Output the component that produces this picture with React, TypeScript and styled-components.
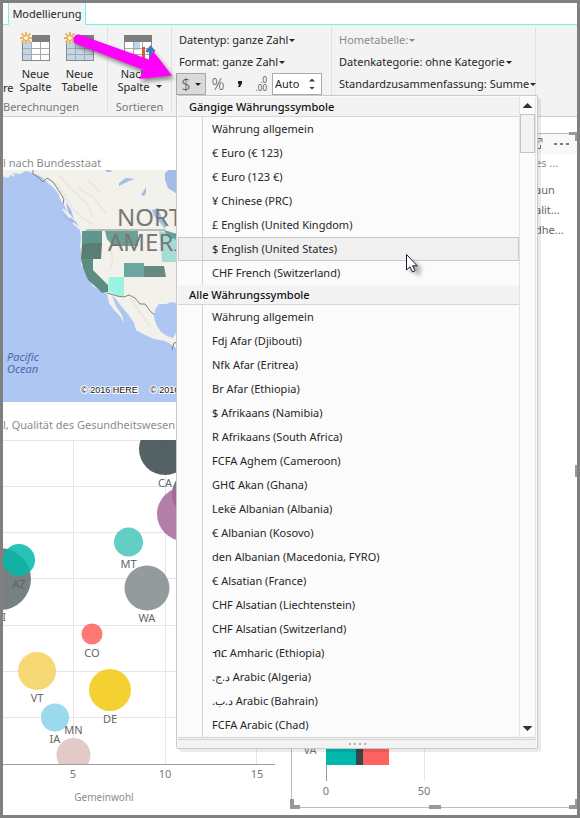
import React from "react";
import styled, { createGlobalStyle, css } from "styled-components";

const GlobalStyle = createGlobalStyle`
  *, *::before, *::after { box-sizing: border-box; }
  body {
    margin: 0;
    background: #fff;
    color: #262626;
    font: 11px/14px "Noto Sans", "Noto Sans CJK SC", sans-serif;
  }
  button, input { font: inherit; color: inherit; }
  button { margin: 0; padding: 0; border: 0; background: none; }
  svg { display: block; }
`;

const Frame = styled.div`
  display: flex;
  flex-direction: column;
  min-height: 100vh;
  border: 3px solid #808080;
  overflow: hidden;
`;

/* ---------- ribbon ---------- */

const TabStrip = styled.nav`
  display: flex;
  height: 22px;
  border-bottom: 1px solid #73f7dc;
  padding-left: 5px;
`;

const Tab = styled.button`
  width: 78px;
  height: 22px;
  border: solid #73f7dc;
  border-width: 0 1px;
  background: #f3f3f3;
`;

const Ribbon = styled.header`
  position: relative;
  z-index: 2;
  display: flex;
  height: 92px;
  padding-top: 2px;
  background: #f3f3f3;
  border-bottom: 1px solid #cfcfcf;
`;

const Group = styled.section<{ $width?: number }>`
  display: flex;
  flex-direction: column;
  flex: none;
  width: ${(p) => (p.$width ? `${p.$width}px` : "auto")};
  margin-bottom: 3px;
  border-right: 1px solid #e0e0e0;
`;

const GroupRow = styled.div<{ $end?: boolean }>`
  display: flex;
  flex: 1;
  justify-content: ${(p) => (p.$end ? "flex-end" : "center")};
  overflow: hidden;
`;

const GroupLabel = styled.span<{ $start?: boolean }>`
  color: #777;
  height: 13px;
  line-height: 13px;
  text-align: ${(p) => (p.$start ? "left" : "center")};
`;

const BigButton = styled.button<{ $width?: number }>`
  display: flex;
  flex: none;
  flex-direction: column;
  align-items: center;
  width: ${(p) => p.$width ?? 44}px;
  padding-top: 4px;
  line-height: 13px;
  white-space: nowrap;
`;

const Trimmed = styled.span`
  width: 11px;
  padding-top: 52px;
  line-height: 18px;
`;

const IconCaption = styled.span`
  padding-right: 11px;
`;

const DropLine = styled.span`
  display: flex;
  align-items: center;
  gap: 6px;
`;

const Fields = styled.div<{ $inset: number }>`
  display: flex;
  flex-direction: column;
  align-items: flex-start;
  padding: 1px 0 0 ${(p) => p.$inset}px;
`;

const DropButton = styled.button`
  display: flex;
  align-items: center;
  gap: 1px;
  height: 22px;
  padding-top: 2px;
  white-space: nowrap;
  &:disabled { color: #8a8a8a; }
`;

const Caret = styled.span`
  width: 0;
  height: 0;
  border: solid transparent;
  border-width: 3px 3px 0;
  border-top-color: currentColor;
`;

const FormatBar = styled.div`
  position: relative;
  display: flex;
  height: 22px;
  margin: 1px 0 0 -3px;
`;

const FormatButton = styled.button<{ $open?: boolean; $width?: number }>`
  display: flex;
  align-items: center;
  justify-content: center;
  gap: 4px;
  width: ${(p) => p.$width ?? 28}px;
  color: #555;
  font-size: 16px;
  font-weight: 300;
  ${(p) =>
    p.$open &&
    css`
      background: #dadada;
      border: 1px solid #a6a6a6;
      ${Caret} { color: #222; }
    `}
`;

const DecimalLabel = styled.label`
  display: flex;
  flex-direction: column;
  align-items: flex-end;
  justify-content: center;
  width: 22px;
  padding-right: 4px;
  font-size: 8px;
  line-height: 8px;
  color: #555;
`;

const Spinner = styled.label`
  display: flex;
  width: 50px;
  margin-left: 1px;
  border: 1px solid #ababab;
  background: #fff;
`;

const SpinnerInput = styled.input`
  width: 36px;
  padding: 0 0 0 2px;
  border: 0;
  outline: 0;
  background: none;
`;

const SpinnerArrows = styled.span`
  display: flex;
  flex-direction: column;
  justify-content: center;
  gap: 5px;
`;

const Arrow = styled.button<{ $up?: boolean; $size?: number }>`
  width: ${(p) => (p.$size ?? 3) * 2}px;
  height: ${(p) => p.$size ?? 3}px;
  background: #333;
  clip-path: ${(p) => (p.$up ? "polygon(50% 0, 100% 100%, 0 100%)" : "polygon(0 0, 100% 0, 50% 100%)")};
`;

const Callout = styled.svg`
  position: absolute;
  left: 62px;
  top: 0;
  z-index: 5;
  pointer-events: none;
`;

/* ---------- currency menu ---------- */

const Menu = styled.div`
  position: absolute;
  z-index: 3;
  top: 22px;
  left: 0;
  width: 362px;
  padding: 1px 1px 0;
  background: #fbfbfb;
  border: 1px solid #c9c9c9;
  border-radius: 2px;
  box-shadow: 3px 3px 0 rgba(0, 0, 0, 0.08);
`;

const MenuBody = styled.div`
  display: flex;
`;

const MenuList = styled.div`
  flex: 1;
`;

const MenuHeading = styled.h3`
  height: 20px;
  margin: 0;
  padding-left: 11px;
  font-size: 11px;
  font-weight: 500;
  line-height: 20px;
  color: #111;
  background: #f3f3f3;
  border-bottom: 1px solid #d6d6d6;
`;

const MenuItems = styled.ul`
  margin: 0;
  padding: 0;
  list-style: none;
`;

const Gutter = styled.span`
  width: 25px;
  border-right: 1px solid #d3d3d3;
`;

const MenuItem = styled.button<{ $active?: boolean }>`
  display: flex;
  gap: 9px;
  width: 100%;
  height: 24px;
  line-height: 24px;
  text-align: left;
  white-space: nowrap;
  ${(p) =>
    p.$active &&
    css`
      background: #f0f0f0;
      box-shadow: inset 0 0 0 1px #c9c9c9;
    `}
`;

const ScrollTrack = styled.div`
  display: flex;
  flex-direction: column;
  align-items: center;
  width: 17px;
  padding: 6px 0;
  border: solid #e3e3e3;
  border-width: 0 1px;
`;

const Thumb = styled.span`
  width: 15px;
  height: 39px;
  margin: 6px 0 auto;
  background: #f2f2f2;
  border: 1px solid #c3c3c3;
`;

const Grip = styled.div`
  display: flex;
  justify-content: center;
  align-items: center;
  gap: 3px;
  height: 11px;
  border-top: 3px double #d3d3d3;
  background: #f3f3f3;
`;

const GripDot = styled.i`
  width: 2px;
  height: 2px;
  background: #b3b3b3;
`;

const Pointer = styled.svg`
  position: absolute;
  left: 228px;
  top: 157px;
`;

/* ---------- report canvas ---------- */

const Canvas = styled.main`
  display: flex;
  flex: 1;
  background: #fff;
`;

const LeftColumn = styled.div`
  flex: none;
  width: 287px;
  padding-top: 38px;
`;

const TileTitle = styled.h2<{ $height: number }>`
  height: ${(p) => p.$height}px;
  margin: 0;
  font-size: 11px;
  font-weight: 400;
  line-height: 15px;
  color: #8c8c8c;
  white-space: nowrap;
`;

const TileSpacer = styled.div`
  height: 15px;
`;

const ChartSvg = styled.svg`
  font-size: 11px;
`;

const SelectedTile = styled.section`
  position: relative;
  display: flex;
  flex-direction: column;
  flex: 1;
  margin: 16px 0 7px 1px;
  border: solid #bdbdbd;
  border-width: 1px 0 1px 1px;
`;

const TileTools = styled.div`
  display: flex;
  justify-content: flex-end;
  align-items: center;
  gap: 11px;
  height: 20px;
  padding-right: 7px;
  background: #f8f8f8;
`;

const ToolButton = styled.button`
  color: #777;
`;

const Legend = styled.ul`
  display: flex;
  flex-direction: column;
  gap: 6px;
  margin: 0 0 auto;
  padding: 2px 0 0 243px;
  list-style: none;
  color: #666;
  white-space: nowrap;
`;

const LegendTitle = styled.li`
  margin-bottom: 7px;
  color: #8c8c8c;
`;

type HandleSpot = "tr" | "r" | "bl" | "b" | "br";

const spots: Record<HandleSpot, ReturnType<typeof css>> = {
  tr: css`right: 0; top: -2px; width: 8px; height: 9px; border-width: 3px 2px 0 0;`,
  r: css`right: 0; top: calc(50% - 6px); width: 2px; height: 12px; border-width: 0 2px 0 0;`,
  bl: css`left: -2px; bottom: -2px; width: 10px; height: 10px; border-width: 0 0 4px 4px;`,
  b: css`left: 137px; bottom: -2px; width: 12px; height: 4px; border-width: 0 0 4px 0;`,
  br: css`right: 0; bottom: -2px; width: 8px; height: 10px; border-width: 0 2px 4px 0;`,
};

const Handle = styled.i<{ $spot: HandleSpot }>`
  position: absolute;
  border: solid #999;
  ${(p) => spots[p.$spot]}
`;

/* ---------- drawings ---------- */

function Spark() {
  return (
    <g stroke="#e8b55f" strokeWidth="2" fill="none">
      <circle cx="7" cy="7" r="2.6" fill="#fff8e8" strokeWidth="1.5" />
      <path d="M7 1v3M7 10v3M1 7h3M10 7h3M2.5 2.5l2 2M9.500 9.500l2 2M11.500 2.500l-2 2M4.500 9.500l-2 2" />
    </g>
  );
}

function TableIcon({ full, sort }: { full?: boolean; sort?: boolean }) {
  const width = sort ? 38 : 34;
  return (
    <svg width={width} height="36" viewBox={`0 0 ${width} 36`} aria-hidden="true">
      <rect x="3.500" y="6.500" width="27" height="23" fill="#fff" stroke="#8a8a8a" />
      <rect x="4" y="10" width={full ? 26 : 8} height="19" fill={sort ? "#fff" : "#c1d6e8"} />
      {sort && <rect x="12" y="10" width="7" height="9" fill="#c1d6e8" />}
      <path d="M12.500 10v19M21.500 10v19M4 17.500h26M4 23.500h26" stroke="#a8a8a8" />
      <rect x="3" y="4" width="28" height="7" fill="#7d7d7d" />
      {sort ? (
        <>
          <path d="M22.500 16v14" stroke="#d85c35" strokeWidth="3" />
          <path d="M29.500 32V18M25.500 21l4-4.500 4 4.500" stroke="#3f7cb8" strokeWidth="3" fill="none" />
        </>
      ) : (
        <>
          <rect width="13" height="11" fill="#f3f3f3" />
          <Spark />
        </>
      )}
    </svg>
  );
}

function MapDrawing() {
  return (
    <ChartSvg width="287" height="232" viewBox="3 170 287 232" role="img" aria-label="Nordamerika">
      <rect x="3" y="170" width="287" height="232" fill="#adc7f2" />
      <path
        d="M3 170V176L8 178L13 173L20 174L26 171L33 173L42 177L48 183L53 187L58 193L61 201L65 206L67 213L71 219L75 225L80 230L81 237L80 246L82 257L81 265L84 270L88 278L93 286L102 292L107 294L109 303L114 310L120 316L124 323L122 315L116 306L112 296L116 299L121 306L128 314L134 323L136 330L145 335L154 339L165 341L172 345L180 351H290V170Z"
        fill="#f3f1eb"
      />
      <path d="M290 304H180L172 302L166 304L159 304L155 310L154 318L157 326L161 332L167 336L173 338L176 333L180 331H290Z" fill="#adc7f2" />
      <path
        d="M48 178l10 8 8 11 7 12 12 11 9 5M60 176l11 13 15 13 7 15M77 187l16 10 13 17M109 246l4 12-3 12M130 298l12 17 9 12M87 179l13 13"
        fill="none"
        stroke="#ebe8e0"
        strokeWidth="2"
      />
      <path
        d="M119 183l7-5 9 1-6 2-6 3-4 2zM143 192l3-5v6l-2 3-3-1zM165 173l4-3h8v24l-9-6-3-8zM152 210l6-2 4 10 4 8-1 3-4-5-7-8zM105 170l5 0 2 2-5 0zM62 215l12 10 6 3-4-6-8-7zM66 202l2 10 6 7-3-9z"
        fill="#a3bce8"
      />
      <path d="M4 177l7-4 3 3M52 184l8 10M63 209l7 9M73 223l8 6" stroke="#eef1f5" strokeWidth="2" fill="none" />
      <path d="M82 231h20v14H82z" fill="#5e968b" />
      <path d="M82 244h3l4-1h13l-1 16H81z" fill="#5b7e74" />
      <path d="M81 259h12v11l15 15v7l-6 1-6-6-8-7-5-12z" fill="#5d8d81" />
      <path d="M105 231h33v15h-25l-6-7z" fill="#69a097" />
      <path d="M109 277h15v20l-7-1-9-5z" fill="#9bf3e4" />
      <path d="M124 263h20v14h-20z" fill="#6aa79e" />
      <path d="M144 266h20l2 11h-22z" fill="#668a7f" />
      <path d="M159 231l18 3v28h-15l-1-15z" fill="#a5ddd6" />
      <path d="M164 230l13 4v6l-9-3z" fill="#5da69e" />
      <g fontSize="24" fill="#777774">
        <text x="117" y="226">NORTH</text>
        <text x="108" y="251">AMERICA</text>
      </g>
      <path
        d="M33 170v4l5 3 5 5 4-4 6 4 6 9 5 8-1 5M86 230h79M107 293l10 3 7 1 5-2 6 3 5 6h5l6 8 4 3M172 350l2-7 4-1"
        fill="none"
        stroke="#85837d"
      />
      <g fontStyle="italic" fill="#4b68a6">
        <text x="7" y="361">Pacific</text>
        <text x="7" y="373">Ocean</text>
      </g>
      <g fontSize="9" fontFamily="Liberation Sans, Arial, sans-serif" fill="#111" stroke="#fff" strokeWidth="2" paintOrder="stroke">
        <text x="81" y="393">© 2016 HERE</text>
        <text x="150" y="393">© 2016</text>
      </g>
    </ChartSvg>
  );
}

const bubbles = [
  { x: 165, y: 449, r: 26, fill: "#374649", label: "CA", ly: 487 },
  { x: 198, y: 494, r: 26, fill: "#5f6b6d" },
  { x: 184, y: 514, r: 27, fill: "#a66999" },
  { x: 128.5, y: 542, r: 14.5, fill: "#46c5ba", label: "MT", ly: 568 },
  { x: 147, y: 588, r: 22.5, fill: "#808a8c", label: "WA", ly: 622 },
  { x: 0, y: 579, r: 31, fill: "#5f6b6d" },
  { x: 19, y: 560, r: 16, fill: "#01b8aa", label: "AZ", ly: 588, ink: "#5b6765" },
  { x: 92, y: 634, r: 10.5, fill: "#fd625e", label: "CO", ly: 657 },
  { x: 37, y: 671, r: 19, fill: "#f4d25c", label: "VT", ly: 702 },
  { x: 110, y: 690, r: 21, fill: "#f2c80f", label: "DE", ly: 723 },
  { x: 55, y: 717.5, r: 14, fill: "#8ad4eb", label: "IA", ly: 743 },
  { x: 73.5, y: 755, r: 17, fill: "#dfbfbf", label: "MN", ly: 734 },
];

function BubbleChart() {
  return (
    <ChartSvg width="287" height="370" viewBox="3 440 287 370" role="img" aria-label="Gemeinwohl">
      <path
        d="M3 440.500H275M3 486.500H275M3 532.500H275M3 578.500H275M3 625.500H275M3 671.500H275M3 717.500H275M73.500 440V764M165.500 440V764M256.500 440V764"
        stroke="#e6e6e6"
      />
      <clipPath id="plot"><rect x="3" y="440" width="272" height="324" /></clipPath>
      <g clipPath="url(#plot)" fillOpacity="0.85">
        {bubbles.map((b) => (
          <circle key={`${b.x}-${b.y}`} cx={b.x} cy={b.y} r={b.r} fill={b.fill} />
        ))}
      </g>
      <path d="M3 764.500H275" stroke="#a0a0a0" />
      <g fill="#666" textAnchor="middle">
        {bubbles.map((b) => b.label && (
          <text key={b.label} x={b.x} y={b.ly} fill={b.ink ?? "#666"}>{b.label}</text>
        ))}
        <text x="4" y="621">I</text>
        <g fill="#777">
          <text x="73" y="778">5</text>
          <text x="165" y="778">10</text>
          <text x="257" y="778">15</text>
        </g>
        <text x="104" y="801" fontSize="10" fill="#8c8c8c">Gemeinwohl</text>
      </g>
    </ChartSvg>
  );
}

function BarChart() {
  return (
    <ChartSvg width="285" height="70" viewBox="292 737 285 70" role="img" aria-label="VA">
      <path d="M424.500 737v44" stroke="#e6e6e6" />
      <path d="M326.500 737v44" stroke="#999" />
      <rect x="326" y="744" width="30" height="21" fill="#01b8aa" />
      <rect x="356" y="744" width="7" height="21" fill="#374649" />
      <rect x="363" y="744" width="26" height="21" fill="#fd625e" />
      <g fill="#777" textAnchor="middle">
        <text x="310" y="754">VA</text>
        <text x="326" y="795">0</text>
        <text x="424" y="795">50</text>
      </g>
    </ChartSvg>
  );
}

const common = [
  "Währung allgemein",
  "€ Euro (€ 123)",
  "€ Euro (123 €)",
  "¥ Chinese (PRC)",
  "£ English (United Kingdom)",
  "$ English (United States)",
  "CHF French (Switzerland)",
];

const all = [
  "Währung allgemein",
  "Fdj Afar (Djibouti)",
  "Nfk Afar (Eritrea)",
  "Br Afar (Ethiopia)",
  "$ Afrikaans (Namibia)",
  "R Afrikaans (South Africa)",
  "FCFA Aghem (Cameroon)",
  "GH₵ Akan (Ghana)",
  "Lekë Albanian (Albania)",
  "€ Albanian (Kosovo)",
  "den Albanian (Macedonia, FYRO)",
  "€ Alsatian (France)",
  "CHF Alsatian (Liechtenstein)",
  "CHF Alsatian (Switzerland)",
  "ብር Amharic (Ethiopia)",
  "د.ج.\u200f Arabic (Algeria)",
  "د.ب.\u200f Arabic (Bahrain)",
  "FCFA Arabic (Chad)",
];

function MenuSection({ title, items, active }: { title: string; items: string[]; active?: number }) {
  return (
    <>
      <MenuHeading>{title}</MenuHeading>
      <MenuItems aria-label={title}>
        {items.map((item, i) => (
          <li key={item}>
            <MenuItem $active={i === active}>
              <Gutter />
              <bdi dir="ltr">{item}</bdi>
            </MenuItem>
          </li>
        ))}
      </MenuItems>
    </>
  );
}

function CurrencyMenu() {
  return (
    <Menu>
      <MenuBody>
        <MenuList>
          <MenuSection title="Gängige Währungssymbole" items={common} active={5} />
          <MenuSection title="Alle Währungssymbole" items={all} />
        </MenuList>
        <ScrollTrack>
          <Arrow $up $size={5} aria-label="Nach oben" />
          <Thumb />
          <Arrow $size={5} aria-label="Nach unten" />
        </ScrollTrack>
      </MenuBody>
      <Grip><GripDot /><GripDot /><GripDot /><GripDot /></Grip>
      <Pointer width="22" height="28" viewBox="0 0 22 28" aria-hidden="true">
        <path d="M5 6v14l4-3 4 6 3-2-3-5h5z" fill="#000" opacity="0.35" filter="blur(2px)" />
        <path d="M1.500 1.500v15.500l3.500-3.200 2.500 5.200 2.500-1.200-2.400-5h4.600z" fill="#fff" stroke="#1c1c33" />
      </Pointer>
    </Menu>
  );
}

export default function App() {
  return (
    <Frame>
      <GlobalStyle />
      <TabStrip><Tab>Modellierung</Tab></TabStrip>
      <Ribbon>
        <Group $width={105}>
          <GroupRow $end>
            <Trimmed>re</Trimmed>
            <BigButton><TableIcon />Neue<br />Spalte</BigButton>
            <BigButton><TableIcon full />Neue<br />Tabelle</BigButton>
            <Trimmed />
          </GroupRow>
          <GroupLabel $start>Berechnungen</GroupLabel>
        </Group>
        <Group $width={64}>
          <GroupRow>
            <BigButton $width={56}>
              <TableIcon sort />
              <IconCaption>Nach</IconCaption>
              <DropLine>Spalte <Caret /></DropLine>
            </BigButton>
          </GroupRow>
          <GroupLabel>Sortieren</GroupLabel>
        </Group>
        <Group $width={160}>
          <Fields $inset={7}>
            <DropButton>Datentyp: ganze Zahl <Caret /></DropButton>
            <DropButton>Format: ganze Zahl <Caret /></DropButton>
            <FormatBar>
              <FormatButton $open $width={30} aria-label="Währungsformat">$ <Caret /></FormatButton>
              <FormatButton $width={24}>%</FormatButton>
              <FormatButton $width={19} aria-label="Tausendertrennzeichen">
                <svg width="6" height="8" viewBox="0 0 6 8"><path d="M1 1h4v2.500L3 7H1l1-3H1z" fill="#222" /></svg>
              </FormatButton>
              <DecimalLabel htmlFor="decimals"><span>.0</span><span>.00</span></DecimalLabel>
              <Spinner>
                <SpinnerInput id="decimals" aria-label="Dezimalstellen" defaultValue="Auto" />
                <SpinnerArrows>
                  <Arrow $up aria-label="Mehr" />
                  <Arrow aria-label="Weniger" />
                </SpinnerArrows>
              </Spinner>
              <CurrencyMenu />
            </FormatBar>
          </Fields>
        </Group>
        <Group $width={204}>
          <Fields $inset={7}>
            <DropButton disabled>Hometabelle: <Caret /></DropButton>
            <DropButton>Datenkategorie: ohne Kategorie <Caret /></DropButton>
            <DropButton>Standardzusammenfassung: Summe <Caret /></DropButton>
          </Fields>
        </Group>
        <Callout width="120" height="70" viewBox="65 25 120 70" aria-hidden="true">
          <path
            d="M79 34.500L149 59.500L153 51L172 75.500L139 79L143.500 70L75.500 43.500A5 5 0 0 1 79 34.500Z"
            fill="#ff00fa"
            style={{ filter: "drop-shadow(2px 3px 2px rgba(0,0,0,.45))" }}
          />
        </Callout>
      </Ribbon>
      <Canvas>
        <LeftColumn>
          <TileTitle $height={15}>l nach Bundesstaat</TileTitle>
          <MapDrawing />
          <TileSpacer />
          <TileTitle $height={23}>l, Qualität des Gesundheitswesen</TileTitle>
          <BubbleChart />
        </LeftColumn>
        <SelectedTile>
          <TileTools>
            <ToolButton aria-label="Fokusmodus">
              <svg width="12" height="12" viewBox="0 0 12 12" fill="none" stroke="#777">
                <path d="M5 2.500H1.500v8h8V7M4.500 7L10 1.500M7 .500h4v4" />
              </svg>
            </ToolButton>
            <ToolButton aria-label="Weitere Optionen">
              <svg width="16" height="4" viewBox="0 0 16 4" fill="#777">
                <rect x="0" y="1" width="3" height="2" />
                <rect x="6" y="1" width="3" height="2" />
                <rect x="12" y="1" width="3" height="2" />
              </svg>
            </ToolButton>
          </TileTools>
          <Legend>
            <LegendTitle>es ...</LegendTitle>
            <li>aun</li>
            <li>alit...</li>
            <li>dhe...</li>
          </Legend>
          <BarChart />
          <Handle $spot="tr" />
          <Handle $spot="r" />
          <Handle $spot="bl" />
          <Handle $spot="b" />
          <Handle $spot="br" />
        </SelectedTile>
      </Canvas>
    </Frame>
  );
}
